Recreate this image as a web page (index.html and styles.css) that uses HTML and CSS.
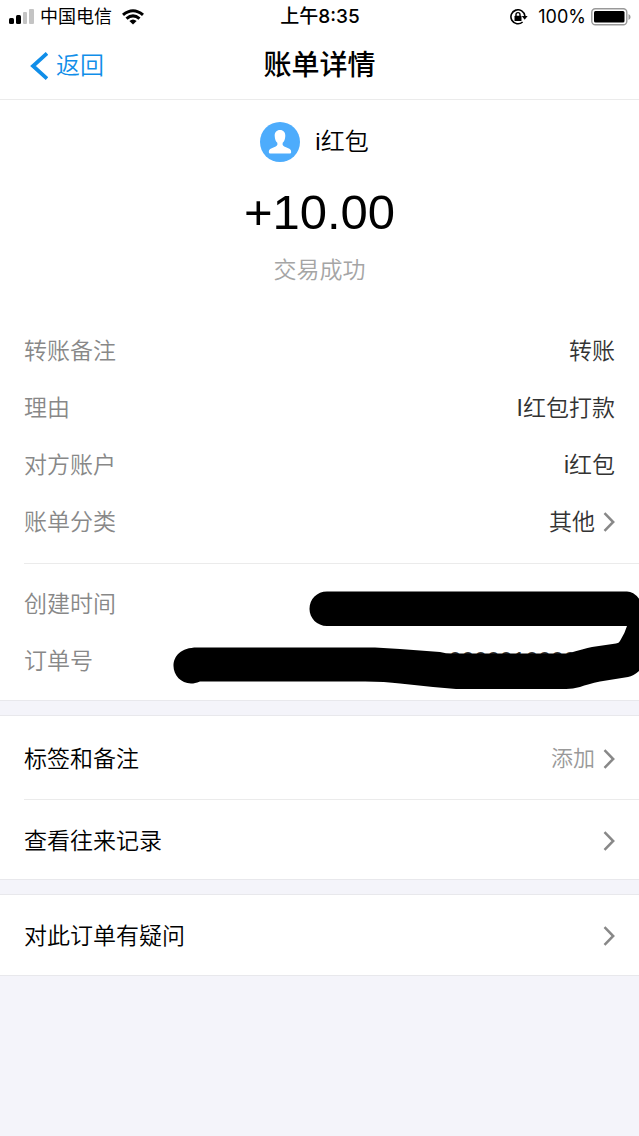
FILE: index.html
```html
<!DOCTYPE html>
<html lang="zh-CN">
<head>
  <meta charset="UTF-8">
  <meta name="viewport" content="width=device-width, initial-scale=1">
  <title>账单详情</title>
  <link rel="stylesheet" href="styles.css">
</head>
<body>

  <svg class="defs" width="0" height="0" aria-hidden="true">
    <symbol id="chevron" viewBox="0 0 12 20">
      <path d="M1.5 1.2 L10.2 10 L1.5 18.8" fill="none" stroke="currentColor" stroke-width="2.5"/>
    </symbol>
  </svg>

  <!-- status bar -->
  <div class="statusbar">
    <div class="carrier">
      <svg class="signal" width="26" height="16" viewBox="0 0 26 16">
        <rect x="0" y="9" width="5" height="6" rx="1.5"/>
        <rect x="7" y="6" width="5" height="9" rx="1.5"/>
        <g fill="#c4c4c4">
          <rect x="14" y="3" width="4" height="12" rx="1"/>
          <rect x="20" y="0" width="5" height="15" rx="1"/>
        </g>
      </svg>
      <span>中国电信</span>
      <svg class="wifi" width="22" height="16" viewBox="0 0 22 16">
        <g fill="none" stroke="#000" stroke-width="3.1">
          <path d="M1 5.9 Q11 -2.4 21 5.9"/>
          <path d="M4.5 9.6 Q11 4.2 17.5 9.6"/>
        </g>
        <path d="M7.4 12 Q11 9 14.6 12 L11 15.6 Z"/>
      </svg>
    </div>
    <span class="time">上午8:35</span>
    <div class="power">
      <svg width="18" height="16" viewBox="0 0 18 16">
        <path d="M12.6 13 A7 7 0 1 1 14.9 7" fill="none" stroke="#000" stroke-width="1.6"/>
        <path d="M11.8 7 H17.6 L14.7 10.8 Z"/>
        <rect x="4.5" y="6.8" width="7" height="5.2" rx="0.6"/>
        <path d="M6 7.2 V5.6 A2 2 0 0 1 10 5.6 V7.2" fill="none" stroke="#000" stroke-width="1.4"/>
      </svg>
      <span>100%</span>
      <svg width="40" height="18" viewBox="0 0 40 18">
        <rect x="0.8" y="0.8" width="35" height="16" rx="3.5" fill="none" stroke="#999" stroke-width="1.4"/>
        <rect x="3" y="3" width="30.5" height="11.5" rx="1.5"/>
        <path d="M37.5 6 Q39.6 7 39.6 9 Q39.6 11 37.5 12 Z" fill="#999"/>
      </svg>
    </div>
  </div>

  <header class="navbar">
    <a class="back" href="#">
      <svg width="18" height="28" viewBox="0 0 18 28">
        <path d="M17 1.4 L3 14 L17 26.6" fill="none" stroke="currentColor" stroke-width="3.8"/>
      </svg>
      <span>返回</span>
    </a>
    <h1>账单详情</h1>
  </header>

  <main>
    <section class="card">
      <div class="summary">
        <div class="payee">
          <svg width="40" height="40" viewBox="0 0 40 40">
            <circle cx="20" cy="20" r="20" fill="#4dacfc"/>
            <path fill="#fff" d="M20 8 C16.6 8 14.5 10.4 14.7 14 C14.8 17.4 15.9 19.6 17.3 20.8 C17.9 23.4 16.8 24.3 14 25.3 C10.6 26.5 8.8 27.4 8.8 30 Q8.8 31.6 10.2 31.6 H29.8 Q31.2 31.6 31.2 30 C31.2 27.4 29.4 26.5 26 25.3 C23.2 24.3 22.1 23.4 22.7 20.8 C24.1 19.6 25.2 17.4 25.3 14 C25.5 10.4 23.4 8 20 8 Z"/>
          </svg>
          <span>i红包</span>
        </div>
        <div class="amount">+10.00</div>
        <div class="state">交易成功</div>
      </div>

      <dl class="details">
        <div class="row"><dt>转账备注</dt><dd>转账</dd></div>
        <div class="row"><dt>理由</dt><dd>I红包打款</dd></div>
        <div class="row"><dt>对方账户</dt><dd>i红包</dd></div>
        <div class="row">
          <dt>账单分类</dt>
          <dd><a href="#">其他 <svg class="chevron"><use href="#chevron"/></svg></a></dd>
        </div>
      </dl>

      <dl class="details order">
        <div class="row"><dt>创建时间</dt><dd></dd></div>
        <div class="row"><dt>订单号</dt><dd>0000010000000</dd></div>
        <!-- marker over the private values -->
        <svg class="marker" width="479" height="137" viewBox="160 564 479 137">
          <path d="M327 591.5 H627 Q634 591.5 640 600 V670 Q634 676 628 677 L600 681.5 Q588 684 580 687 Q572 689.2 565 689 H456 L433 687 L400 683.5 Q385 681.5 365 681.5 H200 C196 683 194 683.5 191 683.5 C181 683.5 173.5 675 173.5 666 C173.5 656 181 647.5 197 647.5 H375 L400 649 L440 652 Q446 653.5 452 653.5 H568 Q584 648.5 592 647 L616 643.5 Q619 643 620 641 Q625 633 627 626 H327 C317 626 309.5 618 309.5 609 C309.5 599 317 591.5 327 591.5 Z"/>
        </svg>
      </dl>
    </section>

    <nav class="card links">
      <a href="#">标签和备注 <span class="add">添加 <svg class="chevron"><use href="#chevron"/></svg></span></a>
      <a href="#">查看往来记录 <svg class="chevron"><use href="#chevron"/></svg></a>
    </nav>

    <nav class="card links">
      <a href="#">对此订单有疑问 <svg class="chevron"><use href="#chevron"/></svg></a>
    </nav>
  </main>

</body>
</html>
```
FILE: styles.css
```css
* {
  box-sizing: border-box;
}

body {
  margin: 0;
  background: #f4f4fa;
  color: #000;
  font-family: "Liberation Sans", "Noto Sans CJK SC", sans-serif;
  font-size: 23px;
  font-weight: 350;
  line-height: 32px;
  overflow-x: hidden;
}

a {
  color: inherit;
  text-decoration: none;
}

svg {
  display: block;
  flex: none;
}

.defs {
  position: absolute;
}

/* top bars */
.statusbar {
  display: grid;
  grid-template-columns: 1fr auto 1fr;
  align-items: center;
  height: 32px;
  padding: 1px 8px 0 9px;
  background: #fff;
  font-family: Inter, "Noto Sans CJK SC", sans-serif;
  font-size: 18px;
  font-weight: 400;
}

.carrier,
.power {
  display: flex;
  align-items: center;
  gap: 5px;
}

.wifi {
  margin-left: 5px;
}

.time {
  font-size: 19px;
  font-weight: 500;
}

.power {
  justify-content: flex-end;
}

.power span {
  margin-left: 5px;
}

.navbar {
  display: grid;
  grid-template-columns: 1fr auto 1fr;
  align-items: center;
  height: 68px;
  padding: 1px 30px 0;
  background: #fff;
  border-bottom: 1px solid #ebebeb;
}

.back {
  display: flex;
  align-items: center;
  gap: 8px;
  color: #108ee9;
  font-size: 24px;
}

.navbar h1 {
  margin: 0;
  font-size: 28px;
  font-weight: 500;
}

/* cards */
.card {
  margin-bottom: 14px;
  background: #fff;
  border-bottom: 1px solid #e8e8ec;
}

.card + .card {
  border-top: 1px solid #e8e8ec;
}

.summary {
  padding: 22px 0 36px;
  text-align: center;
}

.payee {
  display: flex;
  justify-content: center;
  align-items: center;
  gap: 15px;
  padding-right: 10px;
  font-size: 24px;
}

.amount {
  margin: 22px 0 14px;
  font-size: 49px;
  line-height: 56px;
}

.state {
  color: #a5a5a5;
}

.details {
  margin: 0 0 0 24px;
  padding-bottom: 13px;
}

.row {
  display: flex;
  justify-content: space-between;
  align-items: center;
  height: 57px;
  padding-right: 24px;
}

.row dt {
  color: #888;
}

.row dd {
  margin: 0;
  color: #333;
}

.row a {
  display: flex;
  align-items: center;
  gap: 8px;
}

.order {
  position: relative;
  padding: 11px 0;
  border-top: 1px solid #ebebeb;
}

.marker {
  position: absolute;
  top: 0;
  right: 0;
}

.chevron {
  width: 12px;
  height: 20px;
  color: #888;
}

.links a {
  display: flex;
  justify-content: space-between;
  align-items: center;
  height: 83px;
  margin-left: 24px;
  padding: 2px 24px 0 0;
}

.links a + a {
  border-top: 1px solid #ebebeb;
}

.links a:last-child {
  height: 80px;
}

.add {
  display: flex;
  align-items: center;
  gap: 8px;
  color: #999;
  font-size: 22px;
}
```
